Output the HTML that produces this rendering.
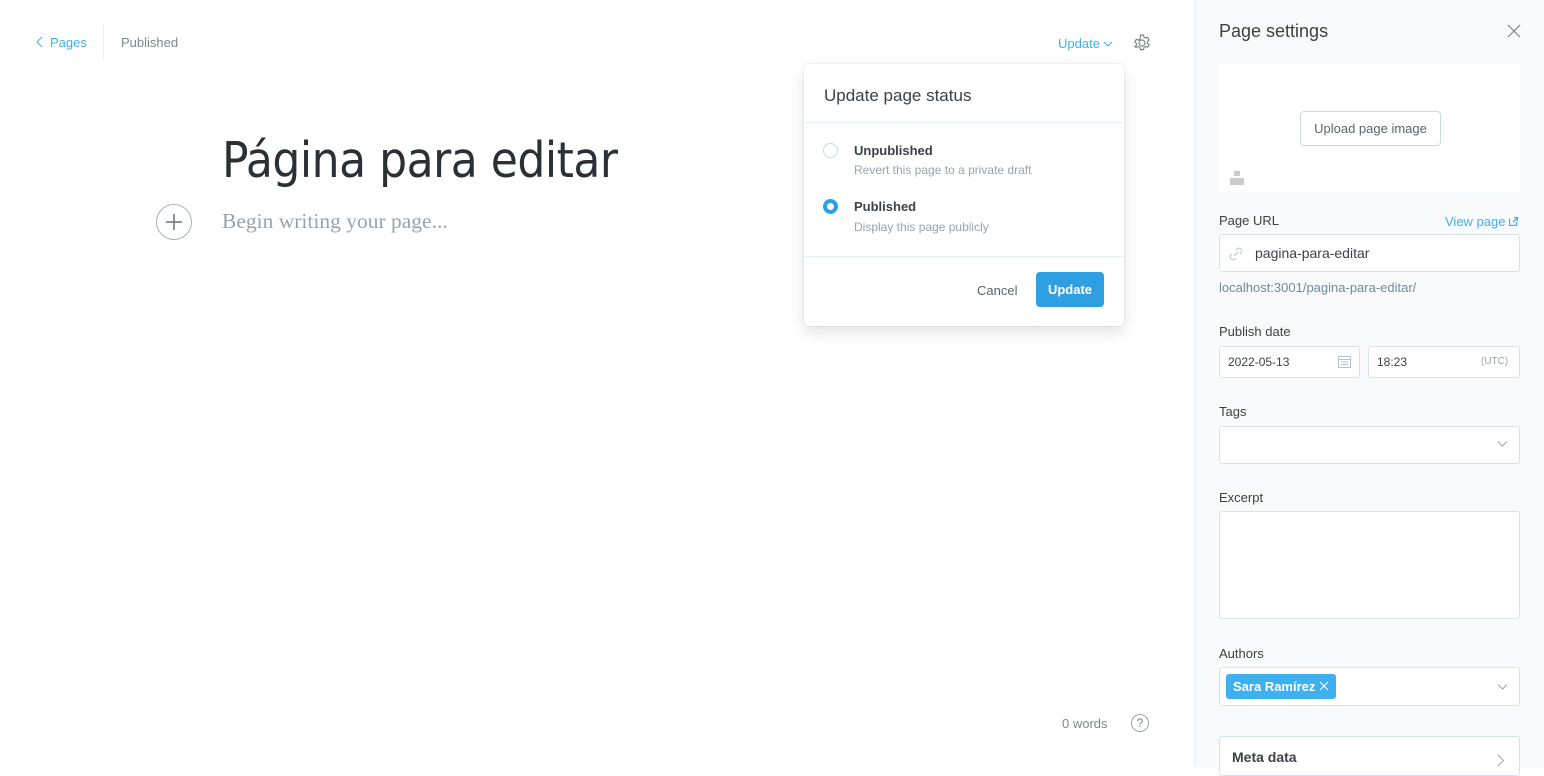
<!DOCTYPE html>
<html><head><meta charset="utf-8"><style>
*{box-sizing:border-box;margin:0;padding:0}
body{width:1544px;height:767px;overflow:hidden;background:#fff;font-family:"Liberation Sans",sans-serif;color:#3c4146;position:relative}
.a{position:absolute}
.in{position:absolute;background:#fff;border:1px solid #d8e2ea;border-radius:3px}
.lbl{position:absolute;font-size:13px;color:#3c4146;font-weight:500}
</style></head><body>
<div class="a" style="left:36px;top:35px;font-size:13px;color:#3eb0ef">
<svg width="8" height="12" style="vertical-align:-1px;margin-right:6px"><path d="M6 1L1 6l5 5" fill="none" stroke="#3eb0ef" stroke-width="1"/></svg>Pages</div>
<div class="a" style="left:103px;top:24px;width:1px;height:36px;background:#e5eff5"></div>
<div class="a" style="left:121px;top:35px;font-size:13px;color:#7d878a">Published</div>

<div class="a" style="left:1058px;top:36px;font-size:13px;color:#3eb0ef">Update<svg width="10" height="8" style="margin-left:3px"><path d="M1 2l4 4 4-4" fill="none" stroke="#3eb0ef"/></svg></div>
<svg class="a" style="left:1132px;top:33px" width="20" height="20" viewBox="0 0 20 20"><circle cx="10" cy="10" r="3" fill="none" stroke="#7d878a" stroke-width="1.2"/><path d="M8.5 2h3l.5 2.2 1.6.9 2.1-.8 1.5 2.6-1.7 1.5v1.8l1.7 1.5-1.5 2.6-2.1-.8-1.6.9-.5 2.2h-3l-.5-2.2-1.6-.9-2.1.8L2.8 13.7l1.7-1.5V10.4L2.8 8.9 4.3 6.3l2.1.8L8 6.2z" fill="none" stroke="#7d878a" stroke-width="1.2"/></svg>

<div class="a" style="left:222px;top:132px;font-size:49px;color:#2b3035;font-family:'DejaVu Sans Condensed','Liberation Sans',sans-serif;font-weight:normal;letter-spacing:-0.5px">Página para editar</div>
<div class="a" style="left:156px;top:204px;width:36px;height:36px;border:1px solid #a9b3b9;border-radius:50%"><svg width="34" height="34"><path d="M17 9v16M9 17h16" stroke="#6c757a" stroke-width="1.5"/></svg></div>
<div class="a" style="left:222px;top:209px;font-size:21.5px;color:#99a3ad;font-family:'Liberation Serif',serif">Begin writing your page...</div>

<div class="a" style="left:804px;top:64px;width:320px;height:262px;background:#fff;border-radius:5px;box-shadow:0 0 0 1px rgba(0,0,0,.04),0 6px 16px rgba(0,0,0,.12)">
<div class="a" style="left:20px;top:22px;font-size:17px;color:#3c4146">Update page status</div>
<div class="a" style="left:0;top:58px;width:320px;height:1px;background:#e5eff5"></div>
<div class="a" style="left:19px;top:79px;width:15px;height:15px;border:1px solid #c8d8e4;border-radius:50%"></div>
<div class="a" style="left:50px;top:79px;font-size:13px;font-weight:bold;color:#3c4146">Unpublished</div>
<div class="a" style="left:50px;top:99px;font-size:12px;color:#99a3ad">Revert this page to a private draft</div>
<div class="a" style="left:19px;top:135px;width:15px;height:15px;border:4px solid #2ea0e1;border-radius:50%;background:#fff"></div>
<div class="a" style="left:50px;top:135px;font-size:13px;font-weight:bold;color:#3c4146">Published</div>
<div class="a" style="left:50px;top:156px;font-size:12px;color:#99a3ad">Display this page publicly</div>
<div class="a" style="left:0;top:192px;width:320px;height:1px;background:#e5eff5"></div>
<div class="a" style="left:173px;top:219px;font-size:13px;color:#5d6468">Cancel</div>
<div class="a" style="left:232px;top:208px;width:68px;height:35px;background:#2ea0e1;border-radius:4px;color:#fff;font-size:13px;font-weight:bold;text-align:center;line-height:35px">Update</div>
</div>

<div class="a" style="left:1062px;top:716px;font-size:13px;color:#7d878a">0 words</div>
<div class="a" style="left:1131px;top:714px;width:18px;height:18px;border:1px solid #9aa3a8;border-radius:50%;font-size:12px;color:#7d878a;text-align:center;line-height:16px">?</div>

<div class="a" style="left:1194px;top:0;width:350px;height:767px;background:#f8fafb;border-left:1px solid #e5eff5"></div>
<div class="a" style="left:1219px;top:21px;font-size:18px;font-weight:500;color:#3c4146">Page settings</div>
<svg class="a" style="left:1507px;top:24px" width="14" height="14"><path d="M1 1l12 12M13 1L1 13" stroke="#7d878a" stroke-width="1.2"/></svg>
<div class="a" style="left:1219px;top:63px;width:301px;height:130px;background:#fff;border-radius:3px"></div>
<div class="a" style="left:1300px;top:111px;width:141px;height:35px;border:1px solid #cfd8de;border-radius:4px;background:#fff;font-size:13px;color:#5d6468;text-align:center;line-height:33px">Upload page image</div>
<div class="a" style="left:1230px;top:171px;width:14px;height:14px"><div class="a" style="left:4px;top:0;width:6px;height:5px;background:#ccc"></div><div class="a" style="left:0;top:7px;width:14px;height:7px;background:#ccc"></div></div>

<div class="lbl" style="left:1219px;top:213px">Page URL</div>
<div class="a" style="left:1445px;top:214px;font-size:13px;color:#3eb0ef">View page <svg width="9" height="9" style="vertical-align:0"><path d="M0.5 1.5v7h7V5M4 5l4.5-4.5M5 0.5h3.5V4" fill="none" stroke="#3eb0ef" stroke-width="1.3"/></svg></div>
<div class="in" style="left:1219px;top:234px;width:301px;height:38px"></div>
<svg class="a" style="left:1229px;top:247px" width="14" height="14"><path d="M5 9l4-4M3 7l-1 1a2.5 2.5 0 0 0 4 4l1-1M11 7l1-1a2.5 2.5 0 0 0-4-4L7 3" fill="none" stroke="#c8d2d8" stroke-width="1.3"/></svg>
<div class="a" style="left:1255px;top:245px;font-size:14px;color:#3c4146">pagina-para-editar</div>
<div class="a" style="left:1219px;top:280px;font-size:13px;color:#738a94">localhost:3001/pagina-para-editar/</div>

<div class="lbl" style="left:1219px;top:324px">Publish date</div>
<div class="in" style="left:1219px;top:346px;width:141px;height:32px"></div>
<div class="a" style="left:1228px;top:355px;font-size:12px;color:#3c4146">2022-05-13</div>
<svg class="a" style="left:1338px;top:355px" width="13" height="13"><rect x="0.5" y="1.5" width="12" height="11" fill="none" stroke="#b8c2c8"/><path d="M0 4.5h13M3 7h7M3 9.5h7" stroke="#b8c2c8"/></svg>
<div class="in" style="left:1368px;top:346px;width:152px;height:32px"></div>
<div class="a" style="left:1377px;top:355px;font-size:12px;color:#3c4146">18:23</div>
<div class="a" style="left:1481px;top:356px;font-size:10px;color:#9aa3a8">(UTC)</div>

<div class="lbl" style="left:1219px;top:404px">Tags</div>
<div class="in" style="left:1219px;top:426px;width:301px;height:38px"></div>
<svg class="a" style="left:1497px;top:440px" width="11" height="8"><path d="M1 1.5l4.5 4.5 4.5-4.5" fill="none" stroke="#9aa3a8"/></svg>

<div class="lbl" style="left:1219px;top:490px">Excerpt</div>
<div class="in" style="left:1219px;top:511px;width:301px;height:108px"></div>

<div class="lbl" style="left:1219px;top:646px">Authors</div>
<div class="in" style="left:1219px;top:667px;width:301px;height:39px"></div>
<div class="a" style="left:1226px;top:674px;width:110px;height:25px;background:#3eb0ef;border-radius:3px;color:#fff;font-size:13px;font-weight:bold;line-height:25px;padding-left:7px">Sara Ramírez <svg width="10" height="10"><path d="M1 1l8 8M9 1L1 9" stroke="#fff" stroke-width="1.1"/></svg></div>
<svg class="a" style="left:1497px;top:683px" width="11" height="8"><path d="M1 1.5l4.5 4.5 4.5-4.5" fill="none" stroke="#9aa3a8"/></svg>

<div class="in" style="left:1219px;top:736px;width:301px;height:40px"></div>
<div class="a" style="left:1232px;top:749px;font-size:14px;font-weight:bold;color:#3c4146">Meta data</div>
<svg class="a" style="left:1497px;top:754px" width="8" height="13"><path d="M1 1l5.5 5.5L1 12" fill="none" stroke="#9aa3a8"/></svg>
</body></html>
